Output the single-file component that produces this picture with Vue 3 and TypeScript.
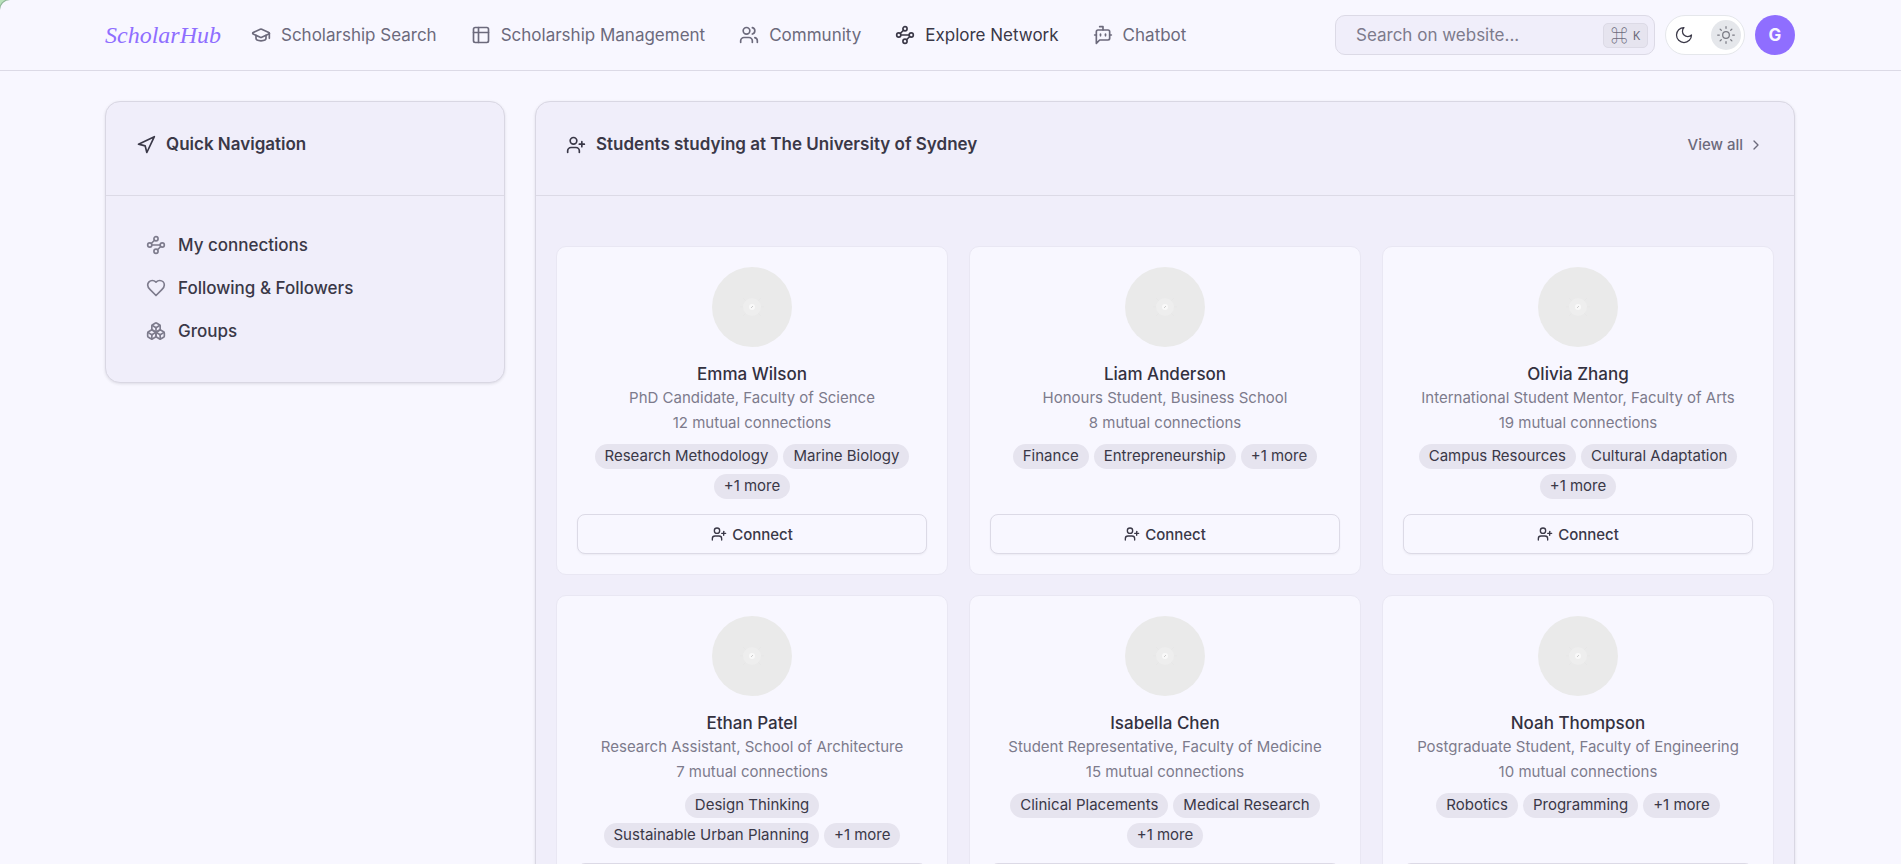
<script setup lang="ts">
import { ref } from 'vue'

interface NavItem {
  label: string
  icon: string
  active?: boolean
}

interface Student {
  name: string
  role: string
  mutual: number
  tags: string[]
}

const icons: Record<string, string[]> = {
  cap: [
    'M21.42 10.922a1 1 0 0 0-.019-1.838L12.83 5.18a2 2 0 0 0-1.66 0L2.6 9.08a1 1 0 0 0 0 1.832l8.57 3.908a2 2 0 0 0 1.66 0z',
    'M22 10v6',
    'M6 12.500V16a6 3 0 0 0 12 0v-3.500',
  ],
  table: ['M5 3h14a2 2 0 0 1 2 2v14a2 2 0 0 1-2 2H5a2 2 0 0 1-2-2V5a2 2 0 0 1 2-2z', 'M3 9h18', 'M9 3v18'],
  users: [
    'M16 21v-2a4 4 0 0 0-4-4H6a4 4 0 0 0-4 4v2',
    'M9 3a4 4 0 1 0 0 8a4 4 0 1 0 0-8z',
    'M22 21v-2a4 4 0 0 0-3-3.870',
    'M16 3.130a4 4 0 0 1 0 7.750',
  ],
  waypoints: [
    'M12 2a2.500 2.500 0 1 0 0 5a2.500 2.500 0 1 0 0-5z',
    'm10.200 6.300-3.900 3.900',
    'M4.500 9.500a2.500 2.500 0 1 0 0 5a2.500 2.500 0 1 0 0-5z',
    'M7 12h10',
    'M19.500 9.500a2.500 2.500 0 1 0 0 5a2.500 2.500 0 1 0 0-5z',
    'm13.800 17.700 3.900-3.900',
    'M12 17a2.500 2.500 0 1 0 0 5a2.500 2.500 0 1 0 0-5z',
  ],
  bot: [
    'M12 6V2H8',
    'm8 18-4 4V8a2 2 0 0 1 2-2h12a2 2 0 0 1 2 2v8a2 2 0 0 1-2 2Z',
    'M2 12h2',
    'M9 11v2',
    'M15 11v2',
    'M20 12h2',
  ],
  navigation: ['M3 11 22 2l-9 19-2-8z'],
  heart: [
    'M19 14c1.490-1.460 3-3.210 3-5.500A5.500 5.500 0 0 0 16.500 3c-1.760 0-3 .5-4.500 2-1.500-1.500-2.740-2-4.500-2A5.500 5.500 0 0 0 2 8.500c0 2.300 1.500 4.050 3 5.500l7 7Z',
  ],
  boxes: [
    'M2.970 12.920A2 2 0 0 0 2 14.630v3.240a2 2 0 0 0 .970 1.710l3 1.800a2 2 0 0 0 2.060 0L12 19v-5.500l-5-3-4.030 2.420Z',
    'm7 16.500-4.740-2.850',
    'm7 16.500 5-3',
    'M7 16.500v5.170',
    'M12 13.500V19l3.970 2.380a2 2 0 0 0 2.060 0l3-1.800a2 2 0 0 0 .970-1.710v-3.240a2 2 0 0 0-.970-1.710L17 10.500l-5 3Z',
    'm17 16.500-5-3',
    'm17 16.500 4.740-2.850',
    'M17 16.500v5.170',
    'M7.970 4.420A2 2 0 0 0 7 6.130v4.370l5 3 5-3V6.130a2 2 0 0 0-.970-1.710l-3-1.800a2 2 0 0 0-2.060 0l-3 1.800Z',
    'M12 8 7.260 5.150',
    'm12 8 4.740-2.850',
    'M12 13.500V8',
  ],
  userPlus: [
    'M16 21v-2a4 4 0 0 0-4-4H6a4 4 0 0 0-4 4v2',
    'M9 3a4 4 0 1 0 0 8a4 4 0 1 0 0-8z',
    'M19 8v6',
    'M22 11h-6',
  ],
  moon: ['M12 3a6 6 0 0 0 9 9 9 9 0 1 1-9-9Z'],
  sun: [
    'M12 8a4 4 0 1 0 0 8a4 4 0 1 0 0-8z',
    'M12 2v2',
    'M12 20v2',
    'm4.930 4.930 1.410 1.410',
    'm17.660 17.660 1.410 1.410',
    'M2 12h2',
    'M20 12h2',
    'm6.340 17.660-1.410 1.410',
    'm19.070 4.930-1.410 1.410',
  ],
  chevron: ['m9 18 6-6-6-6'],
}

const navItems: NavItem[] = [
  { label: 'Scholarship Search', icon: 'cap' },
  { label: 'Scholarship Management', icon: 'table' },
  { label: 'Community', icon: 'users' },
  { label: 'Explore Network', icon: 'waypoints', active: true },
  { label: 'Chatbot', icon: 'bot' },
]

const quickLinks: NavItem[] = [
  { label: 'My connections', icon: 'waypoints' },
  { label: 'Following & Followers', icon: 'heart' },
  { label: 'Groups', icon: 'boxes' },
]

const students: Student[] = [
  { name: 'Emma Wilson', role: 'PhD Candidate, Faculty of Science', mutual: 12, tags: ['Research Methodology', 'Marine Biology'] },
  { name: 'Liam Anderson', role: 'Honours Student, Business School', mutual: 8, tags: ['Finance', 'Entrepreneurship'] },
  { name: 'Olivia Zhang', role: 'International Student Mentor, Faculty of Arts', mutual: 19, tags: ['Campus Resources', 'Cultural Adaptation'] },
  { name: 'Ethan Patel', role: 'Research Assistant, School of Architecture', mutual: 7, tags: ['Design Thinking', 'Sustainable Urban Planning'] },
  { name: 'Isabella Chen', role: 'Student Representative, Faculty of Medicine', mutual: 15, tags: ['Clinical Placements', 'Medical Research'] },
  { name: 'Noah Thompson', role: 'Postgraduate Student, Faculty of Engineering', mutual: 10, tags: ['Robotics', 'Programming'] },
]

const query = ref('')
</script>

<template>
  <div class="page">
    <header class="topbar">
      <a class="logo" href="#">ScholarHub</a>
      <nav class="nav" aria-label="Main">
        <a v-for="item in navItems" :key="item.label" class="nav-link" :class="{ active: item.active }" href="#">
          <svg class="icon" viewBox="0 0 24 24" aria-hidden="true"><path v-for="d in icons[item.icon]" :key="d" :d="d" /></svg>
          {{ item.label }}
        </a>
      </nav>
      <div class="tools">
        <div class="search">
          <input v-model="query" class="search-input" type="text" aria-label="Search on website" placeholder="Search on website..." />
          <kbd class="kbd"><span class="cmd">⌘</span>K</kbd>
        </div>
        <button class="theme" type="button" aria-label="Toggle theme">
          <span class="theme-side"><svg class="icon" viewBox="0 0 24 24" aria-hidden="true"><path v-for="d in icons.moon" :key="d" :d="d" /></svg></span>
          <span class="theme-side knob"><svg class="icon" viewBox="0 0 24 24" aria-hidden="true"><path v-for="d in icons.sun" :key="d" :d="d" /></svg></span>
        </button>
        <button class="account" type="button" aria-label="Account">G</button>
      </div>
    </header>

    <main class="content">
      <aside class="panel">
        <div class="panel-head">
          <svg class="icon" viewBox="0 0 24 24" aria-hidden="true"><path v-for="d in icons.navigation" :key="d" :d="d" /></svg>
          <h2 class="panel-title">Quick Navigation</h2>
        </div>
        <nav class="quick" aria-label="Quick navigation">
          <a v-for="link in quickLinks" :key="link.label" class="quick-link" href="#">
            <svg class="icon" viewBox="0 0 24 24" aria-hidden="true"><path v-for="d in icons[link.icon]" :key="d" :d="d" /></svg>
            {{ link.label }}
          </a>
        </nav>
      </aside>

      <section class="panel">
        <div class="panel-head">
          <svg class="icon" viewBox="0 0 24 24" aria-hidden="true"><path v-for="d in icons.userPlus" :key="d" :d="d" /></svg>
          <h2 class="panel-title">Students studying at The University of Sydney</h2>
          <a class="view-all" href="#">
            View all
            <svg class="icon small" viewBox="0 0 24 24" aria-hidden="true"><path v-for="d in icons.chevron" :key="d" :d="d" /></svg>
          </a>
        </div>
        <div class="grid">
          <article v-for="s in students" :key="s.name" class="card">
            <svg class="avatar" viewBox="0 0 80 80" aria-hidden="true">
              <circle cx="40" cy="40" r="40" fill="#eaeaea" />
              <path d="M31 31l18 18M49 31L31 49M28 40h24" stroke="#e7e7e7" />
              <circle cx="40" cy="40" r="9" fill="#eeeeee" />
              <circle cx="40" cy="40" r="3" fill="#f9f9f9" />
              <path d="M39 41l2-2" stroke="#cccccc" />
            </svg>
            <h3 class="name">{{ s.name }}</h3>
            <p class="meta">{{ s.role }}</p>
            <p class="meta mutual">{{ s.mutual }} mutual connections</p>
            <ul class="tags">
              <li v-for="tag in s.tags" :key="tag" class="tag">{{ tag }}</li>
              <li class="tag">+1 more</li>
            </ul>
            <button class="connect" type="button">
              <svg class="icon small" viewBox="0 0 24 24" aria-hidden="true"><path v-for="d in icons.userPlus" :key="d" :d="d" /></svg>
              Connect
            </button>
          </article>
        </div>
      </section>
    </main>
  </div>
</template>

<style>
html,
body {
  background: #b9e2bb;
}

body {
  height: 100vh;
  overflow: hidden;
}
</style>

<style scoped>
.page {
  min-height: 100vh;
  background: #f8f7ff;
  border-top-left-radius: 10px;
  box-shadow: 0 0 0 1px #8fb598;
  color: #3a3847;
  font-family: Inter, "Liberation Sans", sans-serif;
  font-size: 17px;
}

.page * {
  box-sizing: border-box;
}

a {
  color: inherit;
  text-decoration: none;
}

button,
input {
  font: inherit;
  color: inherit;
}

h2,
h3,
p,
ul {
  margin: 0;
  padding: 0;
}

.icon {
  flex: none;
  width: 20px;
  height: 20px;
  fill: none;
  stroke: currentColor;
  stroke-width: 2;
  stroke-linecap: round;
  stroke-linejoin: round;
}

.icon.small {
  width: 16px;
  height: 16px;
}

.topbar {
  display: flex;
  align-items: center;
  gap: 30px;
  height: 71px;
  box-sizing: border-box;
  padding: 0 106px 0 105px;
  border-bottom: 1px solid #dcdae6;
}

.logo {
  color: #8f6eff;
  font-family: "Liberation Serif", serif;
  font-size: 24px;
  font-style: italic;
}

.nav {
  display: flex;
  gap: 34px;
}

.nav-link {
  display: flex;
  align-items: center;
  gap: 10px;
  color: #6c6a7c;
  white-space: nowrap;
}

.nav-link.active {
  color: #3a3847;
}

.tools {
  display: flex;
  align-items: center;
  gap: 10px;
  margin-left: auto;
}

.search {
  display: flex;
  align-items: center;
  width: 320px;
  height: 40px;
  padding: 0 6px 0 20px;
  background: #f0eefa;
  border: 1px solid #dcdae6;
  border-radius: 10px;
}

.search-input {
  flex: 1;
  min-width: 0;
  padding: 0;
  border: 0;
  outline: 0;
  background: transparent;
}

.search-input::placeholder {
  color: #7d7b8c;
  opacity: 1;
}

.kbd {
  display: flex;
  align-items: center;
  justify-content: center;
  gap: 5px;
  width: 45px;
  height: 25px;
  background: #e6e4ef;
  border: 1px solid #dcdae6;
  border-radius: 5px;
  color: #6c6a7c;
  font-family: "Noto Sans", sans-serif;
  font-size: 12px;
}

.cmd {
  font-family: "Noto Sans CJK JP", "DejaVu Sans", sans-serif;
  font-size: 17px;
  font-weight: 300;
  line-height: 20px;
}

.theme {
  display: flex;
  align-items: center;
  justify-content: space-between;
  width: 80px;
  height: 40px;
  padding: 0 3px;
  background: #ffffff;
  border: 1px solid #e5e7eb;
  border-radius: 20px;
}

.theme-side {
  display: grid;
  place-items: center;
  width: 30px;
  height: 30px;
  border-radius: 50%;
}

.theme-side .icon {
  stroke-width: 1.5;
}

.knob {
  background: #e5e7eb;
  color: #7a7b84;
}

.account {
  width: 40px;
  height: 40px;
  padding: 0;
  border: 0;
  border-radius: 50%;
  background: #8f6eff;
  color: #f8f7ff;
  font-weight: 700;
}

.content {
  display: grid;
  grid-template-columns: 400px minmax(0, 1fr);
  align-items: start;
  gap: 30px;
  padding: 30px 106px 30px 105px;
}

.panel {
  background: #f0eefa;
  border: 1px solid #d9d7e3;
  border-radius: 15px;
  box-shadow: 0 1px 3px rgba(58, 56, 71, 0.14);
}

.panel-head {
  display: flex;
  align-items: center;
  gap: 10px;
  padding: 30px 30px 38px;
  border-bottom: 1px solid #dcdae6;
}

.panel-title {
  font-size: 17px;
  font-weight: 600;
  line-height: 25px;
}

.view-all {
  display: flex;
  align-items: center;
  gap: 5px;
  margin-left: auto;
  color: #6c6a7c;
  font-size: 15px;
  font-weight: 500;
}

.quick {
  display: flex;
  flex-direction: column;
  gap: 1px;
  padding: 28px 30px 30px;
}

.quick-link {
  display: flex;
  align-items: center;
  gap: 12px;
  height: 42px;
  padding: 0 10px;
  font-size: 17px;
  font-weight: 500;
}

.quick-link .icon {
  color: #7d7b8c;
}

.grid {
  display: grid;
  grid-template-columns: repeat(3, minmax(0, 1fr));
  gap: 20px 21px;
  padding: 50px 20px 30px;
}

.card {
  display: flex;
  flex-direction: column;
  align-items: center;
  padding: 20px;
  background: #f8f7ff;
  border: 1px solid #e9e7f3;
  border-radius: 10px;
  text-align: center;
}

.avatar {
  width: 80px;
  height: 80px;
  margin-bottom: 15px;
}

.name {
  color: #33313f;
  font-size: 17px;
  font-weight: 500;
  line-height: 25px;
}

.meta {
  color: #7d7b8c;
  font-size: 15px;
  line-height: 22px;
}

.mutual {
  margin-top: 3px;
}

.tags {
  display: flex;
  flex-wrap: wrap;
  justify-content: center;
  gap: 5px;
  margin: 10px 0 15px;
  padding: 0 10px;
  list-style: none;
}

.tag {
  height: 25px;
  padding: 0 10px;
  background: #e6e4ef;
  border-radius: 13px;
  font-size: 15px;
  line-height: 23px;
}

.connect {
  display: flex;
  align-items: center;
  justify-content: center;
  gap: 5px;
  width: 100%;
  height: 40px;
  margin-top: auto;
  background: #f8f7ff;
  border: 1px solid #dcdae6;
  border-radius: 8px;
  box-shadow: 0 1px 2px rgba(58, 56, 71, 0.06);
  font-size: 15px;
  font-weight: 500;
}
</style>
